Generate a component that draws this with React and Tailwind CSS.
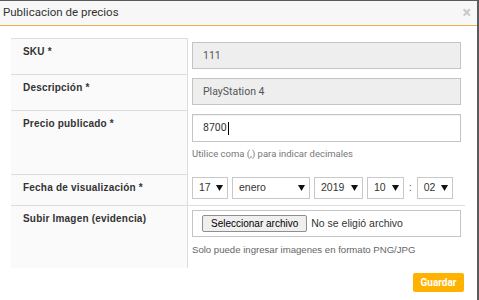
import React from 'react';

const labelCls = "border-t border-r border-[#dddddd] bg-[#fafafa] pl-[12px] pt-[5px] text-[10px] font-bold text-[#333] font-['Liberation_Sans',Arial,sans-serif] tracking-[0.2px]";

const Select = ({ value, width }) => (
  <div
    className="flex h-[22px] items-center justify-between border border-[#c8c8c8] bg-white pl-[6px] pr-[4px] text-[10.5px] text-[#333] font-['Liberation_Sans',Arial,sans-serif]"
    style={{ width }}
  >
    <span>{value}</span>
    <svg width="7" height="6" viewBox="0 0 7 6">
      <path d="M0 0h7L3.5 6z" fill="#111" />
    </svg>
  </div>
);

export default function App() {
  return (
    <div className="h-[300px] w-[479px] overflow-hidden bg-[#5a5a5a] pt-px pr-[2px] font-['Roboto',Arial,sans-serif]">
      <div className="h-full bg-white">
        <div className="flex h-[25px] items-center justify-between border-b border-[#f0ad4e] bg-[#f7f7f7] pl-[3px] pr-[6px]">
          <span className="text-[11.5px] text-[#333]">Publicacion de precios</span>
          <span className="text-[16px] font-bold leading-none text-[#c8c8c8]">×</span>
        </div>

        <div className="ml-[11px] mt-[12px] grid w-[454px] grid-cols-[177px_277px]">
          {/* SKU */}
          <div className={`${labelCls} h-[36px]`}>SKU *</div>
          <div className="pl-[4px] pt-[4px]">
            <div className="flex h-[27px] w-[269px] items-center border border-[#c4c4c4] bg-[#eeeeee] pl-[10px] text-[10.5px] text-[#555]">
              111
            </div>
          </div>

          {/* Descripción */}
          <div className={`${labelCls} h-[36px]`}>Descripción *</div>
          <div className="pl-[4px] pt-[4px]">
            <div className="flex h-[27px] w-[269px] items-center border border-[#c4c4c4] bg-[#eeeeee] pl-[10px] text-[10.5px] text-[#555]">
              PlayStation 4
            </div>
          </div>

          {/* Precio */}
          <div className={`${labelCls} h-[64px]`}>Precio publicado *</div>
          <div className="pl-[4px] pt-[4px]">
            <div className="flex h-[28px] w-[269px] items-center border border-[#c4c4c4] bg-white pl-[10px] text-[10.5px] text-[#333] shadow-[inset_0_1px_1px_rgba(0,0,0,0.06)]">
              8700
              <span className="ml-px inline-block h-[13px] w-px bg-black" />
            </div>
            <p className="mt-[5px] text-[9.5px] text-[#777]">Utilice coma (,) para indicar decimales</p>
          </div>

          {/* Fecha */}
          <div className={`${labelCls} h-[31px]`}>Fecha de visualización *</div>
          <div className="flex items-center gap-[4px] self-start pl-[4px] pt-[3px]">
            <Select value="17" width={36} />
            <Select value="enero" width={78} />
            <Select value="2019" width={49} />
            <Select value="10" width={37} />
            <span className="px-px text-[11px] text-[#555]">:</span>
            <Select value="02" width={36} />
          </div>

          {/* Imagen */}
          <div className={`${labelCls} h-[63px]`}>Subir Imagen (evidencia)</div>
          <div className="border-t border-[#dddddd] pl-[4px] pt-[4px]">
            <div className="flex h-[27px] w-[269px] items-center border border-[#c4c4c4] bg-white pl-[9px] font-['Liberation_Sans',Arial,sans-serif]">
              <span className="flex h-[17px] items-center rounded-[2px] border border-[#8f8f8f] bg-[#efefef] px-[8px] text-[10px] text-black">
                Seleccionar archivo
              </span>
              <span className="ml-[4px] text-[10.5px] text-[#333]">No se eligió archivo</span>
            </div>
            <p className="mt-[6px] text-[9.6px] text-[#666] font-['Liberation_Sans',Arial,sans-serif]">
              Solo puede ingresar imagenes en formato PNG/JPG
            </p>
          </div>
        </div>

        <div className="ml-[413px] mt-[5px] flex h-[19px] w-[51px] items-center justify-center rounded-[2px] bg-[#ffb300] text-[10px] font-bold text-white">
          Guardar
        </div>
      </div>
    </div>
  );
}
